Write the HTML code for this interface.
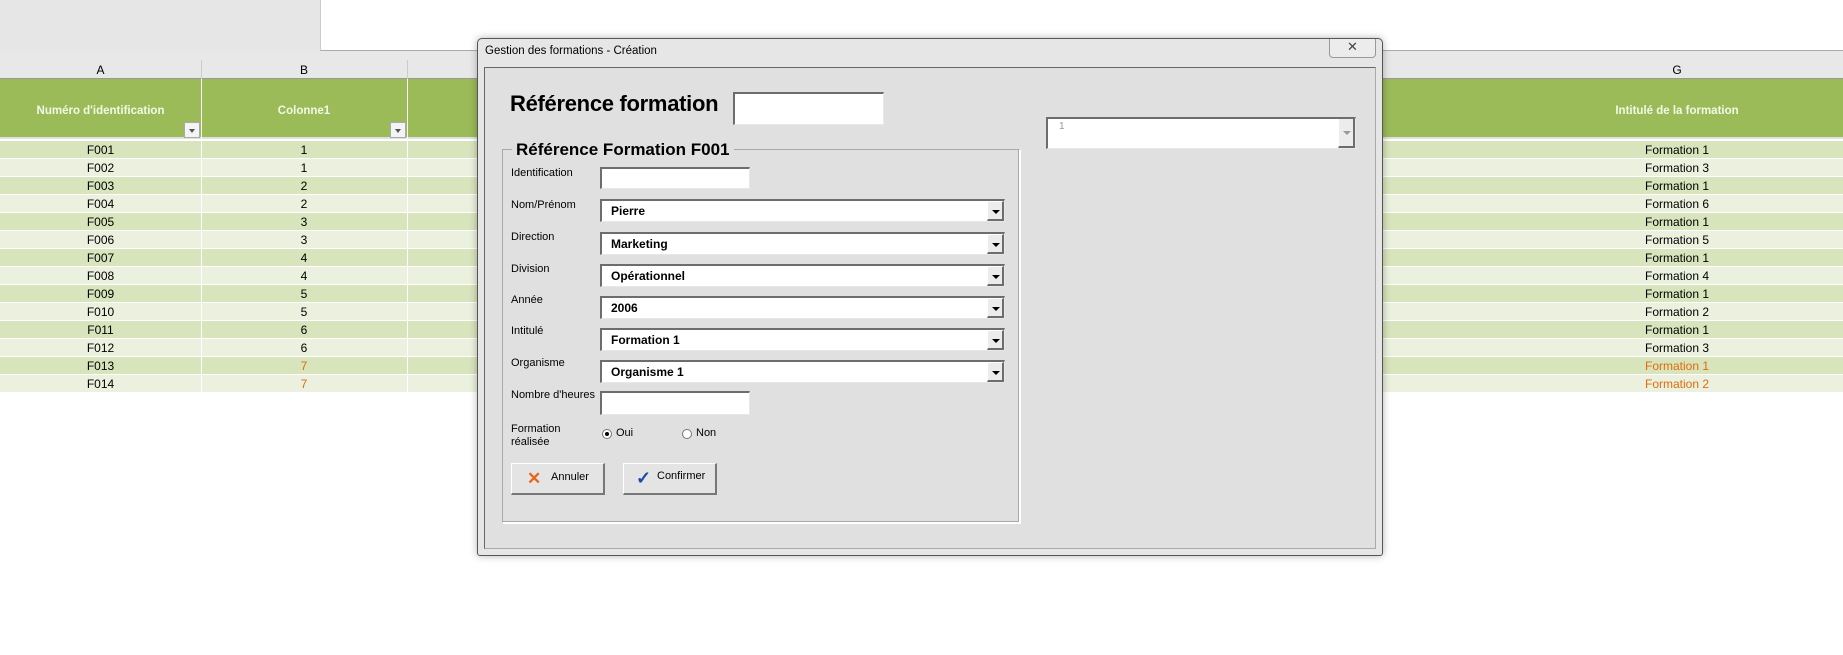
<!DOCTYPE html>
<html><head><meta charset="utf-8"><style>
*{margin:0;padding:0;box-sizing:border-box}
body{width:1843px;height:655px;background:#fff;position:relative;overflow:hidden;font-family:"Liberation Sans",sans-serif;font-size:12px;color:#000}
.a{position:absolute}
.row{position:absolute;left:0;width:1843px;height:18px;border-bottom:1px solid #fff}
.c{position:absolute;text-align:center;font-size:12px;line-height:17px}
.combo{position:absolute;left:600px;width:405px;height:23px;background:#fff;border-top:2px solid #6d6d6d;border-left:2px solid #6d6d6d;border-right:1px solid #e8e8e8;border-bottom:1px solid #e8e8e8;font-weight:bold;font-size:12px;line-height:20px;padding-left:9px}
.combo .btn{position:absolute;right:0;top:0;width:17px;height:20px;background:#ececec;border-right:2px solid #6d6d6d;border-bottom:2px solid #6d6d6d;border-left:1px solid #fff;border-top:1px solid #fff}
.combo .btn:after{content:"";position:absolute;left:4px;top:8px;border-left:4px solid transparent;border-right:4px solid transparent;border-top:4px solid #000}
.lbl{position:absolute;left:511px;font-size:11px}
.tb{position:absolute;background:#fff;border-top:2px solid #6d6d6d;border-left:2px solid #6d6d6d;border-right:1px solid #e8e8e8;border-bottom:1px solid #e8e8e8}
.bt{position:absolute;top:463px;width:94px;height:32px;background:#e4e4e4;border:1px solid #fff;border-right:2px solid #777;border-bottom:2px solid #777;font-size:12px}
</style></head><body>
<div class="a" style="left:0;top:0;width:320px;height:51px;background:#e6e6e6"></div>
<div class="a" style="left:320px;top:0;width:1523px;height:51px;background:#fff;border-bottom:1px solid #aaa;border-left:1px solid #ccc"></div>
<div class="a" style="left:0;top:51px;width:1843px;height:28px;background:#e8e8e8;border-bottom:1px solid #999"></div>
<div class="a" style="left:201px;top:60px;width:1px;height:19px;background:#ccc"></div>
<div class="a" style="left:407px;top:60px;width:1px;height:19px;background:#ccc"></div>
<div class="c" style="left:0;width:201px;top:62px">A</div>
<div class="c" style="left:201px;width:206px;top:62px">B</div>
<div class="c" style="left:1577px;width:200px;top:62px">G</div>
<div class="a" style="left:0;top:79px;width:1843px;height:60px;background:#9bbb59;border-bottom:2px solid #e0e0e0"></div>
<div class="a" style="left:201px;top:79px;width:1px;height:60px;background:#fff"></div>
<div class="a" style="left:407px;top:79px;width:1px;height:60px;background:#fff"></div>
<div class="c" style="left:0;width:201px;top:103px;color:#f2f8e6;font-weight:bold;font-size:11.5px">Numéro d'identification</div>
<div class="c" style="left:201px;width:206px;top:103px;color:#f2f8e6;font-weight:bold;font-size:11.5px">Colonne1</div>
<div class="c" style="left:1577px;width:200px;top:103px;color:#f2f8e6;font-weight:bold;font-size:11.5px">Intitulé de la formation</div>
<div class="a" style="left:184px;top:122px;width:16px;height:16px;background:#f4f4f4;border:1px solid #aaa"><div style="position:absolute;left:4px;top:6px;border-left:3px solid transparent;border-right:3px solid transparent;border-top:4px solid #555"></div></div>
<div class="a" style="left:390px;top:122px;width:16px;height:16px;background:#f4f4f4;border:1px solid #aaa"><div style="position:absolute;left:4px;top:6px;border-left:3px solid transparent;border-right:3px solid transparent;border-top:4px solid #555"></div></div>
<div class="row" style="top:141px;background:#d8e4bc"></div>
<div class="row" style="top:159px;background:#ebf1de"></div>
<div class="row" style="top:177px;background:#d8e4bc"></div>
<div class="row" style="top:195px;background:#ebf1de"></div>
<div class="row" style="top:213px;background:#d8e4bc"></div>
<div class="row" style="top:231px;background:#ebf1de"></div>
<div class="row" style="top:249px;background:#d8e4bc"></div>
<div class="row" style="top:267px;background:#ebf1de"></div>
<div class="row" style="top:285px;background:#d8e4bc"></div>
<div class="row" style="top:303px;background:#ebf1de"></div>
<div class="row" style="top:321px;background:#d8e4bc"></div>
<div class="row" style="top:339px;background:#ebf1de"></div>
<div class="row" style="top:357px;background:#d8e4bc"></div>
<div class="row" style="top:375px;background:#ebf1de"></div>
<div class="a" style="left:201px;top:141px;width:1px;height:252px;background:#fff"></div>
<div class="a" style="left:407px;top:141px;width:1px;height:252px;background:#fff"></div>
<div class="c" style="left:0;width:201px;top:141px;line-height:18px">F001<br>F002<br>F003<br>F004<br>F005<br>F006<br>F007<br>F008<br>F009<br>F010<br>F011<br>F012<br>F013<br>F014</div>
<div class="c" style="left:201px;width:206px;top:141px;line-height:18px">1<br>1<br>2<br>2<br>3<br>3<br>4<br>4<br>5<br>5<br>6<br>6<br><span style="color:#e26b0a">7<br>7</span></div>
<div class="c" style="left:1577px;width:200px;top:141px;line-height:18px">Formation 1<br>Formation 3<br>Formation 1<br>Formation 6<br>Formation 1<br>Formation 5<br>Formation 1<br>Formation 4<br>Formation 1<br>Formation 2<br>Formation 1<br>Formation 3<br><span style="color:#e26b0a">Formation 1<br>Formation 2</span></div>
<div class="a" style="left:477px;top:38px;width:906px;height:518px;background:#e6e6e6;border:1px solid #555;border-radius:5px 5px 3px 3px;box-shadow:0 0 8px rgba(0,0,0,.3)"></div>
<div class="a" style="left:485px;top:45px;font-size:11.5px">Gestion des formations - Création</div>
<div class="a" style="left:1329px;top:39px;width:47px;height:19px;border:1px solid #999;border-top:none;border-radius:0 0 4px 4px;background:#ececec;text-align:center;font-size:13px;line-height:16px;color:#444">✕</div>
<div class="a" style="left:484px;top:67px;width:892px;height:482px;background:#e0e0e0;border:1px solid #666;border-right-color:#aaa;border-bottom-color:#aaa"></div>
<div class="a" style="left:510px;top:91px;font-size:22px;font-weight:bold;letter-spacing:-0.3px">Référence formation</div>
<div class="tb" style="left:733px;top:92px;width:151px;height:33px"></div>
<div class="a" style="left:502px;top:149px;width:518px;height:374px;border:1px solid #a8a8a8;border-right-color:#fff;border-bottom-color:#fff;box-shadow:inset -1px -1px 0 #a8a8a8,1px 1px 0 #fff"></div>
<div class="a" style="left:512px;top:140px;padding:0 4px;background:#e0e0e0;font-size:17px;font-weight:bold">Référence Formation F001</div>
<div class="lbl" style="top:167px">Identification</div>
<div class="tb" style="left:600px;top:167px;width:150px;height:22px"></div>
<div class="lbl" style="top:199px">Nom/Prénom</div>
<div class="combo" style="top:199px">Pierre<div class="btn"></div></div>
<div class="lbl" style="top:231px">Direction</div>
<div class="combo" style="top:232px">Marketing<div class="btn"></div></div>
<div class="lbl" style="top:263px">Division</div>
<div class="combo" style="top:264px">Opérationnel<div class="btn"></div></div>
<div class="lbl" style="top:294px">Année</div>
<div class="combo" style="top:296px">2006<div class="btn"></div></div>
<div class="lbl" style="top:325px">Intitulé</div>
<div class="combo" style="top:328px">Formation 1<div class="btn"></div></div>
<div class="lbl" style="top:357px">Organisme</div>
<div class="combo" style="top:360px">Organisme 1<div class="btn"></div></div>
<div class="lbl" style="top:389px">Nombre d'heures</div>
<div class="tb" style="left:600px;top:391px;width:150px;height:24px"></div>
<div class="lbl" style="top:423px;line-height:13px">Formation<br>réalisée</div>
<div class="a" style="left:602px;top:429px;width:10px;height:10px;border-radius:50%;background:#fff;border:1px solid #777"><div style="position:absolute;left:2px;top:2px;width:4px;height:4px;border-radius:50%;background:#000"></div></div>
<div class="a" style="left:616px;top:427px;font-size:11px">Oui</div>
<div class="a" style="left:682px;top:429px;width:10px;height:10px;border-radius:50%;background:#fff;border:1px solid #777"></div>
<div class="a" style="left:696px;top:427px;font-size:11px">Non</div>
<div class="bt" style="left:511px"><span style="position:absolute;left:15px;top:5px;color:#e8651c;font-size:17px;font-weight:bold">✕</span><span style="position:absolute;left:39px;top:7px;font-size:11px">Annuler</span></div>
<div class="bt" style="left:623px"><span style="position:absolute;left:12px;top:4px;color:#1a4aa8;font-size:18px;font-weight:bold">✓</span><span style="position:absolute;left:33px;top:6px;font-size:11px">Confirmer</span></div>
<div class="tb" style="left:1046px;top:117px;width:310px;height:32px"><span style="position:absolute;left:11px;top:2px;color:#999;font-size:10px">1</span><div style="position:absolute;right:0;top:0;width:17px;height:29px;background:#ececec;border-right:2px solid #6d6d6d;border-bottom:2px solid #6d6d6d;border-left:1px solid #fff"><div style="position:absolute;left:4px;top:12px;border-left:4px solid transparent;border-right:4px solid transparent;border-top:4px solid #999"></div></div></div>
</body></html>
